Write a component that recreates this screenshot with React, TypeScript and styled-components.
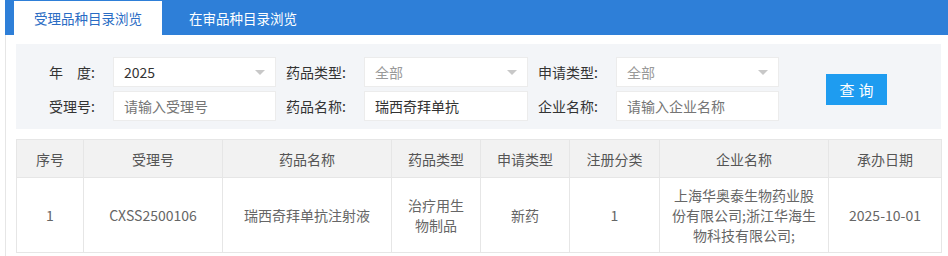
import React from "react";
import styled, {createGlobalStyle} from "styled-components";

const GlobalStyle = createGlobalStyle`
    html, body {
        margin: 0;
        padding: 0;
        background: #fff;
        font-family: "Noto Sans CJK SC", "Noto Sans", sans-serif;
        font-size: 14px;
        color: #333;
    }
`;

const StyledPage = styled.div`
    margin-left: 5px;
    border-left: 1px solid #e6e6e6;
    min-height: 256px;
`;

const StyledTabBar = styled.div`
    background: #2e7fd8;
    display: flex;
    flex-direction: row;
    gap: 7px;
    height: 35px;
    margin-left: -1px;
    padding-left: 9px;
`;

const StyledTab = styled.div<{$active?: boolean}>`
    align-items: center;
    background: ${(p) => (p.$active ? "#fff" : "transparent")};
    color: ${(p) => (p.$active ? "#2a6cc4" : "#fff")};
    cursor: pointer;
    display: flex;
    font-size: 13.5px;
    margin-top: 1px;
    padding: 0 20px;
`;

const StyledContent = styled.div`
    padding: 9px 7px 0 10px;
`;

const StyledSearchPanel = styled.div`
    background: #f3f5f8;
    display: grid;
    grid-template-columns: 88px 163px 88px 164px 88px 163px auto;
    grid-template-rows: 30px 30px;
    row-gap: 4px;
    padding: 13px 9px 8px;
`;

const StyledLabel = styled.label`
    align-items: center;
    color: #333;
    display: flex;
    justify-content: flex-end;
    padding-right: 18px;
    white-space: pre;
`;

const StyledInput = styled.input`
    background: #fff;
    border: 1px solid #ececec;
    box-sizing: border-box;
    color: #333;
    font-family: inherit;
    font-size: 14px;
    height: 30px;
    padding: 0 10px;
    width: 100%;

    ::placeholder {
        color: #a9a9a9;
    }

    :focus {
        outline: none;
    }
`;

const StyledSelect = styled.div<{$muted?: boolean}>`
    align-items: center;
    background: #fff;
    border: 1px solid #ececec;
    box-sizing: border-box;
    color: ${(p) => (p.$muted ? "#999" : "#333")};
    display: flex;
    height: 30px;
    justify-content: space-between;
    padding: 0 10px;
`;

const StyledArrow = styled.span`
    border-left: 5px solid transparent;
    border-right: 5px solid transparent;
    border-top: 5px solid #c8c8c8;
    height: 0;
    width: 0;
`;

const StyledButton = styled.button`
    align-self: center;
    background: #1e9cf0;
    border: none;
    color: #fff;
    cursor: pointer;
    font-family: inherit;
    font-size: 15px;
    grid-column: 7;
    grid-row: 1 / span 2;
    height: 31px;
    letter-spacing: 4px;
    margin-left: 47px;
    padding: 0 0 0 4px;
    width: 61px;
`;

const StyledTable = styled.table`
    border-collapse: collapse;
    margin-top: 10px;
    table-layout: fixed;
    width: 925px;
`;

const StyledTh = styled.th`
    background: #f2f2f2;
    border: 1px solid #e6e6e6;
    color: #555;
    font-weight: normal;
    height: 37px;
    padding: 0 10px;
`;

const StyledTd = styled.td`
    border: 1px solid #e6e6e6;
    color: #666;
    height: 74px;
    line-height: 20px;
    padding: 0 10px;
    text-align: center;
`;

const columns = [
    {title: "序号", width: 67},
    {title: "受理号", width: 139},
    {title: "药品名称", width: 169},
    {title: "药品类型", width: 89},
    {title: "申请类型", width: 89},
    {title: "注册分类", width: 90},
    {title: "企业名称", width: 169},
    {title: "承办日期", width: 113},
];

const rows = [
    [
        "1",
        "CXSS2500106",
        "瑞西奇拜单抗注射液",
        "治疗用生物制品",
        "新药",
        "1",
        "上海华奥泰生物药业股份有限公司;浙江华海生物科技有限公司;",
        "2025-10-01",
    ],
];

export default function App() {
    return (
        <StyledPage>
            <GlobalStyle />
            <StyledTabBar>
                <StyledTab $active>受理品种目录浏览</StyledTab>
                <StyledTab>在审品种目录浏览</StyledTab>
            </StyledTabBar>
            <StyledContent>
                <StyledSearchPanel>
                    <StyledLabel>{"年\u3000度:"}</StyledLabel>
                    <StyledSelect>
                        2025
                        <StyledArrow />
                    </StyledSelect>
                    <StyledLabel>药品类型:</StyledLabel>
                    <StyledSelect $muted>
                        全部
                        <StyledArrow />
                    </StyledSelect>
                    <StyledLabel>申请类型:</StyledLabel>
                    <StyledSelect $muted>
                        全部
                        <StyledArrow />
                    </StyledSelect>
                    <StyledButton type="button">查询</StyledButton>

                    <StyledLabel>受理号:</StyledLabel>
                    <StyledInput placeholder="请输入受理号" />
                    <StyledLabel>药品名称:</StyledLabel>
                    <StyledInput defaultValue="瑞西奇拜单抗" />
                    <StyledLabel>企业名称:</StyledLabel>
                    <StyledInput placeholder="请输入企业名称" />
                </StyledSearchPanel>

                <StyledTable>
                    <colgroup>
                        {columns.map((c) => (
                            <col key={c.title} style={{width: c.width}} />
                        ))}
                    </colgroup>
                    <thead>
                        <tr>
                            {columns.map((c) => (
                                <StyledTh key={c.title}>{c.title}</StyledTh>
                            ))}
                        </tr>
                    </thead>
                    <tbody>
                        {rows.map((r, i) => (
                            <tr key={i}>
                                {r.map((cell, j) => (
                                    <StyledTd key={j}>{cell}</StyledTd>
                                ))}
                            </tr>
                        ))}
                    </tbody>
                </StyledTable>
            </StyledContent>
        </StyledPage>
    );
}
